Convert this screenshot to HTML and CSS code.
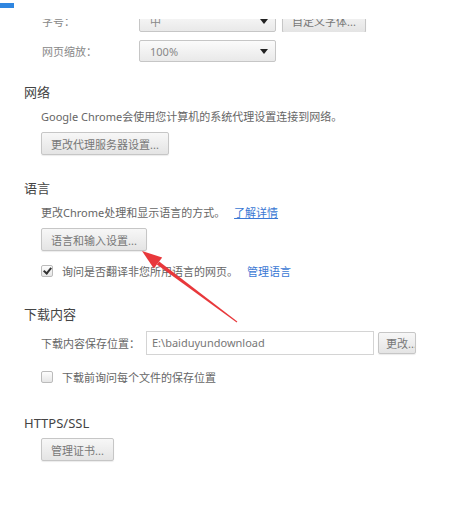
FILE: index.html
```html
<!DOCTYPE html>
<html>
<head>
  <meta charset="utf-8">
  <title>设置</title>
  <link rel="stylesheet" href="styles.css">
</head>
<body>
  <div class="topbar"><span class="tab-mark"></span></div>

  <div class="settings">
    <div class="clip">
      <div class="field-row">
        <span class="field-label">字号：</span>
        <div class="select"><span>中</span><span class="caret"></span></div>
        <button class="btn">自定义字体...</button>
      </div>
    </div>
    <div class="field-row zoom-row">
      <span class="field-label">网页缩放：</span>
      <div class="select"><span>100%</span><span class="caret"></span></div>
    </div>

    <div class="section network">
      <h3>网络</h3>
      <div class="section-body">
        <p class="desc">Google Chrome会使用您计算机的系统代理设置连接到网络。</p>
        <button class="btn">更改代理服务器设置...</button>
      </div>
    </div>

    <div class="section">
      <h3>语言</h3>
      <div class="section-body">
        <p class="desc">更改Chrome处理和显示语言的方式。 <a href="#">了解详情</a></p>
        <button class="btn">语言和输入设置...</button>
        <label class="check-row">
          <span class="checkbox checked"></span>
          询问是否翻译非您所用语言的网页。 <a href="#">管理语言</a>
        </label>
      </div>
    </div>

    <div class="section downloads">
      <h3>下载内容</h3>
      <div class="section-body">
        <div class="path-row">
          <span>下载内容保存位置：</span>
          <div class="path-input">E:\baiduyundownload</div>
          <button class="btn change-btn">更改...</button>
        </div>
        <label class="check-row">
          <span class="checkbox"></span>
          下载前询问每个文件的保存位置
        </label>
      </div>
    </div>

    <div class="section https">
      <h3>HTTPS/SSL</h3>
      <div class="section-body">
        <button class="btn">管理证书...</button>
      </div>
    </div>
  </div>

  <!-- red annotation arrow drawn over the page -->
  <svg class="annotation" width="455" height="507" viewBox="0 0 455 507">
    <polygon points="159.2,261.4 156.8,264.6 236.7,322.4 237.3,321.6" fill="#e8383b"/>
    <polygon points="142,251 162.2,257.4 153.8,268.6" fill="#e8383b"/>
  </svg>
</body>
</html>
```

FILE: styles.css
```css
:root {
  --text-color: #666;
  --heading-color: #444;
  --border-color: #c6c6c6;
  --link-color: #3a78d4;
  --arrow-color: #e8383b;
}

body {
  font-family: "Noto Sans", "Noto Sans CJK SC", sans-serif;
  font-size: 11px;
  color: var(--text-color);
  margin: 0;
  padding: 0;
  background-color: #fff;
  width: 455px;
  height: 507px;
  overflow: hidden;
  position: relative;
}

/* Top strip (cut-off window) */
.topbar {
  height: 19px;
  padding-top: 3px;
  box-sizing: border-box;
}
.tab-mark {
  display: block;
  width: 14px;
  height: 5px;
  background-color: #2f86e0;
}

.settings {
  padding-left: 24px;
}

/* Font rows at the top */
.clip {
  height: 13px;
  overflow: hidden;
  display: flex;
  align-items: flex-end;
}
.field-row {
  display: flex;
  align-items: center;
  padding-left: 18px;
  height: 22px;
  flex-shrink: 0;
}
.zoom-row {
  margin-top: 8px;
}
.field-label {
  width: 97px;
  color: #888;
}
.select {
  width: 118px;
  height: 20px;
  border: 1px solid var(--border-color);
  border-radius: 2px;
  background: linear-gradient(#fbfbfb, #e9e9e9);
  display: flex;
  align-items: center;
  justify-content: space-between;
  padding: 0 7px 0 10px;
  color: #888;
  margin-right: 6px;
}
.caret {
  width: 0;
  height: 0;
  border-left: 4px solid transparent;
  border-right: 4px solid transparent;
  border-top: 5px solid #222;
}

/* Sections */
.section {
  margin-top: 24px;
}
.network {
  margin-top: 21px;
}
.downloads {
  margin-top: 26px;
}
.https {
  margin-top: 29px;
}
h3 {
  font-size: 13px;
  font-weight: normal;
  line-height: 18px;
  color: var(--heading-color);
  margin: 0;
}
.section-body {
  padding-left: 17px;
  display: flex;
  flex-direction: column;
  align-items: flex-start;
}
.desc {
  margin: 8px 0 0;
  height: 16px;
  line-height: 16px;
}
a {
  color: var(--link-color);
  text-decoration: none;
  margin-left: 6px;
}
.desc a {
  text-decoration: underline;
}

/* Buttons */
.btn {
  font-family: inherit;
  font-size: 11px;
  color: #777;
  height: 23px;
  padding: 0 9px;
  border: 1px solid var(--border-color);
  border-radius: 2px;
  background: linear-gradient(#f7f7f7, #e4e4e4);
  box-shadow: 0 1px 1px rgba(0, 0, 0, 0.08);
  cursor: pointer;
}
.section-body .btn {
  margin-top: 7px;
}
.https .section-body .btn {
  margin-top: 6px;
}

/* Checkbox rows */
.check-row {
  display: flex;
  align-items: center;
  gap: 9px;
  margin-top: 12px;
  height: 16px;
}
.check-row a {
  margin-left: 0;
}
.checkbox {
  width: 10px;
  height: 10px;
  border: 1px solid #bbb;
  border-radius: 2px;
  background: linear-gradient(#fdfdfd, #e6e6e6);
  position: relative;
}
.checkbox.checked::after {
  content: "";
  position: absolute;
  left: 3px;
  top: 0;
  width: 3px;
  height: 6px;
  border-right: 2px solid #333;
  border-bottom: 2px solid #333;
  transform: rotate(40deg);
}

/* Download location */
.path-row {
  display: flex;
  align-items: center;
  margin-top: 8px;
  height: 24px;
}
.path-input {
  width: 221px;
  height: 22px;
  line-height: 22px;
  border: 1px solid #d4d4d4;
  padding-left: 5px;
  margin-left: 6px;
  color: #777;
}
.path-row .change-btn {
  margin: 0 0 0 4px;
  height: 22px;
  padding: 0 7px;
  width: 38px;
  text-align: left;
  overflow: hidden;
  white-space: nowrap;
}
.downloads .check-row {
  margin-top: 14px;
}

/* Annotation arrow */
.annotation {
  position: absolute;
  top: 0;
  left: 0;
  pointer-events: none;
}
```
